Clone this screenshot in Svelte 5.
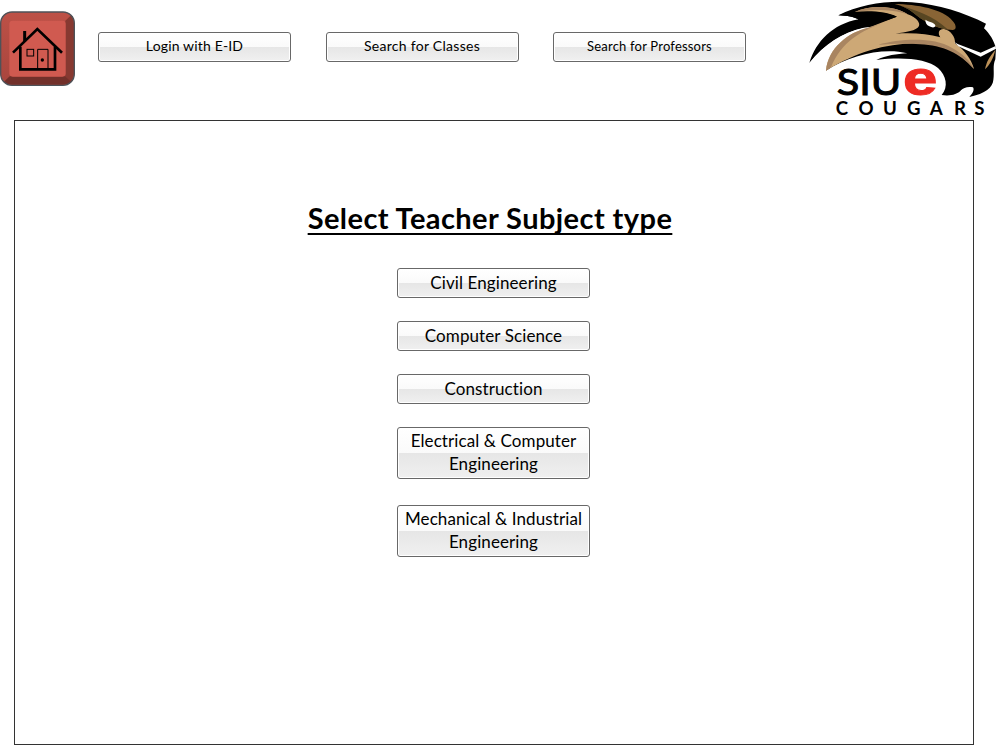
<script>
  const nav = [
    { label: 'Login with E-ID', size: 14, spacing: 0.16 },
    { label: 'Search for Classes', size: 14, spacing: 0.28 },
    { label: 'Search for Professors', size: 13, spacing: 0.2 }
  ];
  const subjects = [
    { lines: ['Civil Engineering'] },
    { lines: ['Computer Science'] },
    { lines: ['Construction'] },
    { lines: ['Electrical & Computer', 'Engineering'] },
    { lines: ['Mechanical & Industrial', 'Engineering'] }
  ];
</script>

<div class="page">
  <header>
    <button class="home" aria-label="Home">
      <svg width="75" height="75" viewBox="0 0 225 225">
        <defs>
          <linearGradient id="base" x1="0" y1="0" x2="0" y2="1">
            <stop offset="0" stop-color="#bd5147" /><stop offset="1" stop-color="#a8453d" />
          </linearGradient>
        </defs>
        <rect x="2" y="3" width="221" height="220" rx="34" fill="url(#base)" />
        <path d="M196 29 L214 12 Q222 20 222 36 V188 Q222 205 212 213 L196 196Z" fill="#873931" />
        <path d="M29 196 H196 L213 212 Q205 221 188 221 H36 Q20 221 12 212Z" fill="#72302a" />
        <rect x="28" y="29" width="169" height="168" rx="10" fill="#d05a50" />
        <rect x="2" y="3" width="221" height="220" rx="34" fill="none" stroke="#4e5258" stroke-width="4" />
        <g fill="none" stroke="#000">
          <path d="M39 125 L112 54 L186 125" stroke-width="8" />
          <path d="M61 107 V175 H165 V107" stroke-width="8" />
          <path d="M74 91 V60" stroke-width="9" />
          <rect x="81" y="115" width="20" height="20" stroke-width="3" />
          <path d="M113 173 V115 H144 V173" stroke-width="3" />
        </g>
        <circle cx="127" cy="147" r="5" />
      </svg>
    </button>
    <nav>
      {#each nav as item, i}
        <button class="btn" class:small={i === 2} style="font-size: {item.size}px; letter-spacing: {item.spacing}px">{item.label}</button>
      {/each}
    </nav>
    <svg class="logo" width="198" height="120" viewBox="0 0 594 360">
      <path d="M115 46 C180 13 265 1 335 7 C415 13 492 38 558 71 L552 85 C569 101 582 122 588 145 L586 178 C577 198 584 216 580 240 C578 262 557 281 508 291 C518 280 524 270 519 262 C503 259 490 263 483 271 C472 284 449 289 425 285 C446 261 439 226 414 204 C382 177 310 170 229 180 C260 166 289 162 322 160 C250 142 150 165 78 212 L110 150 L160 100 L190 85 C130 97 75 132 28 189 C48 124 98 72 176 58 C160 51 144 47 115 46Z" />
      <path d="M28 189 C73 132 125 99 190 83 L215 80 C140 106 94 145 78 212 L60 205Z" fill="#fff" />
      <path d="M78 212 C84 144 145 96 205 83 L290 50 C252 34 213 36 165 36 C208 15 280 15 323 43 C350 53 361 68 357 78 C349 93 318 96 287 101 C338 98 382 101 421 112 C412 98 417 86 432 87 C451 90 467 111 465 130 C494 151 514 177 522 207 C472 150 420 128 350 130 C250 132 169 157 78 212Z" fill="#cda876" />
      <path d="M78 212 C84 144 145 96 205 83 L258 66 C184 91 123 126 93 202Z M165 36 C208 15 280 15 323 43 C281 28 225 28 198 32Z M235 134 C300 116 401 110 455 143 C488 161 510 181 522 207 C477 158 430 137 360 133 C306 129 271 133 235 134Z" fill="#a98561" />
      <path d="M115 46 L165 36 C215 31 260 36 291 50 C260 61 230 70 180 85 L150 77 L176 58 C160 51 144 47 115 46Z" />
      <path d="M284 12 C350 13 430 27 458 63 C471 77 469 90 458 90 C411 89 365 60 340 38 C324 25 307 18 284 12Z" fill="#896435" />
      <path d="M284 12 C348 31 398 45 443 88 C399 82 367 60 340 38 C324 25 307 18 284 12Z" fill="#584622" />
      <path d="M376 59 C386 67 402 66 406 76 C407 83 397 84 388 79 C380 75 376 68 376 59Z" fill="#fff" />
      <path d="M463 126 L473 132 L542 158 L587 138 L588 146 L542 170 L475 139Z" fill="#fff" />
      <path d="M586 150 C580 176 570 193 555 208 C560 185 566 173 586 150Z" fill="#bd9158" />
      <g font-family="Lato, sans-serif">
        <text x="110" y="284" font-size="110" font-weight="400" stroke="#000" stroke-width="3" textLength="194" lengthAdjust="spacingAndGlyphs">SIU</text>
        <text x="309" y="285" font-size="144" font-family="'Liberation Sans', sans-serif" font-weight="700" fill="#ee2b24" stroke="#ee2b24" stroke-width="3" textLength="103" lengthAdjust="spacingAndGlyphs">e</text>
        <g font-size="56" font-weight="700" text-anchor="middle">
          {#each ['C', 'O', 'U', 'G', 'A', 'R', 'S'] as letter, i}
            <text x={[126, 198, 270, 341, 409, 480, 538][i]} y="344">{letter}</text>
          {/each}
        </g>
      </g>
    </svg>
  </header>

  <main>
    <h1>Select Teacher Subject type</h1>
    <div class="subjects">
      {#each subjects as subject, i}
        <button class="btn subject" class:tall={subject.lines.length > 1} class:last={i === 4}>
          {#each subject.lines as line}<span>{line}</span>{/each}
        </button>
      {/each}
    </div>
  </main>
</div>

<style>
  :global(body) { background: #fff; }
  .page { width: 998px; height: 745px; overflow: hidden; box-sizing: border-box; font-family: Lato, sans-serif; font-variant-ligatures: none; color: #000; }
  button { font-family: inherit; color: inherit; margin: 0; }
  header { display: flex; height: 120px; align-items: flex-start; }
  .home { width: 75px; height: 75px; padding: 0; margin-top: 11px; border: 0; background: none; flex: none; }
  svg { display: block; }
  nav { display: flex; gap: 34.5px; margin: 32px 0 0 23px; }
  .btn {
    width: 193px; height: 30px; box-sizing: border-box; padding: 0 0 3px;
    border: 1px solid #686868; border-radius: 3px;
    background: linear-gradient(#fff 0%, #fafafa 50%, #e6e6e6 50%, #f0f0f0 100%);
    box-shadow: inset 0 0 0 1px #fff; white-space: nowrap;
  }
  .small { padding-bottom: 2px; }
  .logo { margin-left: auto; flex: none; }
  main {
    width: 960px; height: 625px; box-sizing: border-box; margin-left: 14px;
    border: 1px solid #333; display: flex; flex-direction: column; align-items: center;
  }
  h1 {
    margin: 77px 0 0; padding-right: 8px; font-size: 29px; line-height: 40px; letter-spacing: 0.42px;
    text-decoration: underline; text-decoration-thickness: 2px; text-underline-offset: 4px; text-decoration-skip-ink: none;
  }
  .subjects { display: flex; flex-direction: column; gap: 23px; margin-top: 30px; padding-right: 1px; }
  .subject {
    display: flex; flex-direction: column; align-items: center; justify-content: center;
    font-size: 17px; line-height: 22.5px; letter-spacing: 0.1px; padding-bottom: 0;
  }
  .tall { height: 52px; padding-bottom: 1px; }
  .last { margin-top: 3px; }
</style>
